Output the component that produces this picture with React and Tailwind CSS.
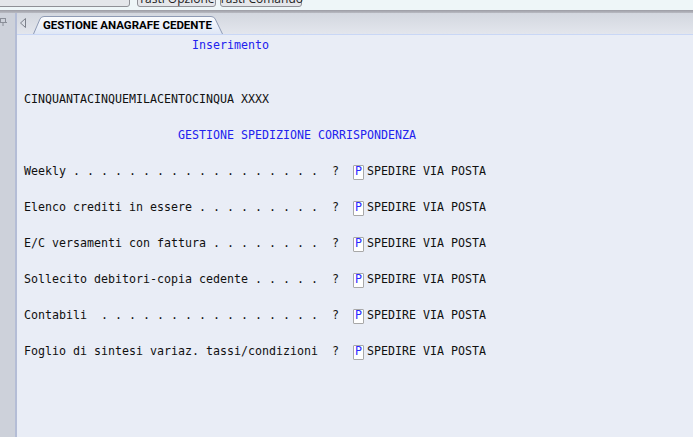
const mono = { fontFamily: '"DejaVu Sans Mono", "Liberation Mono", monospace' }

const rows = [
  'Weekly',
  'Elenco crediti in essere',
  'E/C versamenti con fattura',
  'Sollecito debitori-copia cedente',
  'Contabili ',
  'Foglio di sintesi variaz. tassi/condizioni',
]

function pad(label) {
  let s = label
  while (s.length < 42) s += s.length % 2 === 0 ? ' ' : '.'
  return s + '  ?'
}

function OptionRow({ label }) {
  return (
    <div className="h-[36px] flex items-start">
      <div className="h-[18px] flex items-center">
        <span className="w-[329px] whitespace-pre text-[#101010]">{pad(label)}</span>
        <span className="w-[11px] h-[15px] border border-[#a8a8a8] bg-white rounded-[1px] flex items-center justify-center text-[#2a2aff] leading-none">
          P
        </span>
        <span className="ml-[3px] whitespace-pre text-[#101010]">SPEDIRE VIA POSTA</span>
      </div>
    </div>
  )
}

export default function App() {
  return (
    <div className="w-[693px] h-[437px] overflow-hidden flex flex-col bg-[#e9edf6]" style={{ fontFamily: 'Roboto, sans-serif' }}>
      {/* top strip with clipped buttons */}
      <div className="h-[10px] bg-[#eef6f8] flex items-end gap-[4px] overflow-hidden">
        <div className="ml-[-10px] w-[140px] h-[20px] mb-[3px] border border-[#8f9096] rounded-b-[3px] bg-[#e4e6ea]" />
        <div className="ml-[3px] w-[79px] h-[20px] mb-[3px] border border-[#8f9096] rounded-b-[3px] bg-[#e4e6ea] flex items-end justify-center whitespace-nowrap text-[12px] leading-[12px] text-[#222] pb-[1px]" style={{ fontFamily: '"Open Sans", sans-serif' }}>
          Tasti Opzione
        </div>
        <div className="w-[82px] h-[20px] mb-[3px] border border-[#8f9096] rounded-b-[3px] bg-[#e4e6ea] flex items-end justify-center whitespace-nowrap text-[12px] leading-[12px] text-[#222] pb-[1px]" style={{ fontFamily: '"Open Sans", sans-serif' }}>
          Tasti Comando
        </div>
      </div>
      <div className="h-[3px] bg-gradient-to-b from-[#9c9ca4] to-[#b8bac2]" />

      <div className="flex-1 flex">
        {/* left dock panel */}
        <div className="w-[15px] bg-[#cdd1da] pt-[4px]">
          <svg width="8" height="9" viewBox="0 0 8 9" className="ml-[-1px]">
            <rect x="1.5" y="1.5" width="5" height="4" fill="none" stroke="#8a8e98" />
            <line x1="0" y1="5.5" x2="8" y2="5.5" stroke="#8a8e98" />
            <line x1="4" y1="6" x2="4" y2="9" stroke="#8a8e98" />
          </svg>
        </div>
        <div className="w-[2px] bg-[#b4bdd6]" />

        <div className="flex-1 flex flex-col">
          {/* tab bar */}
          <div className="h-[21px] bg-gradient-to-b from-[#d3d7df] to-[#e3e6ed] flex items-end">
            <svg width="16" height="21" viewBox="0 0 16 21" className="self-start">
              <polygon points="8.5,5.5 8.5,14.5 3.5,10" fill="none" stroke="#7c808a" />
            </svg>
            <div className="relative h-[18px] w-[190px]">
              <svg width="190" height="18" viewBox="0 0 190 18" className="absolute inset-0">
                <defs>
                  <linearGradient id="tabg" x1="0" y1="0" x2="0" y2="1">
                    <stop offset="0" stopColor="#fbfcfe" />
                    <stop offset="1" stopColor="#dfe7f6" />
                  </linearGradient>
                </defs>
                <path d="M0.5,18 L7,3 Q8.2,0.5 11,0.5 L178,0.5 Q181,0.5 182.2,3 L189.5,18" fill="url(#tabg)" stroke="#8e9ab4" />
              </svg>
              <span className="absolute left-[10px] top-[2px] text-[11.5px] leading-[14px] font-bold text-black whitespace-nowrap">
                GESTIONE ANAGRAFE CEDENTE
              </span>
            </div>
          </div>
          <div className="h-[1px] bg-[#c9d7f6]" />

          {/* content */}
          <div className="flex-1 pl-[7px] pt-[2px] text-[11.63px]" style={mono}>
            <div className="h-[18px] flex items-center pl-[168px] text-[#2222ee]">Inserimento</div>
            <div className="h-[36px]" />
            <div className="h-[18px] flex items-center whitespace-pre text-[#101010]">CINQUANTACINQUEMILACENTOCINQUA XXXX</div>
            <div className="h-[18px]" />
            <div className="h-[36px] flex items-start">
              <div className="h-[18px] flex items-center pl-[154px] whitespace-pre text-[#2222ee]">GESTIONE SPEDIZIONE CORRISPONDENZA</div>
            </div>
            {rows.map((r) => (
              <OptionRow key={r} label={r} />
            ))}
          </div>
        </div>
      </div>
    </div>
  )
}
